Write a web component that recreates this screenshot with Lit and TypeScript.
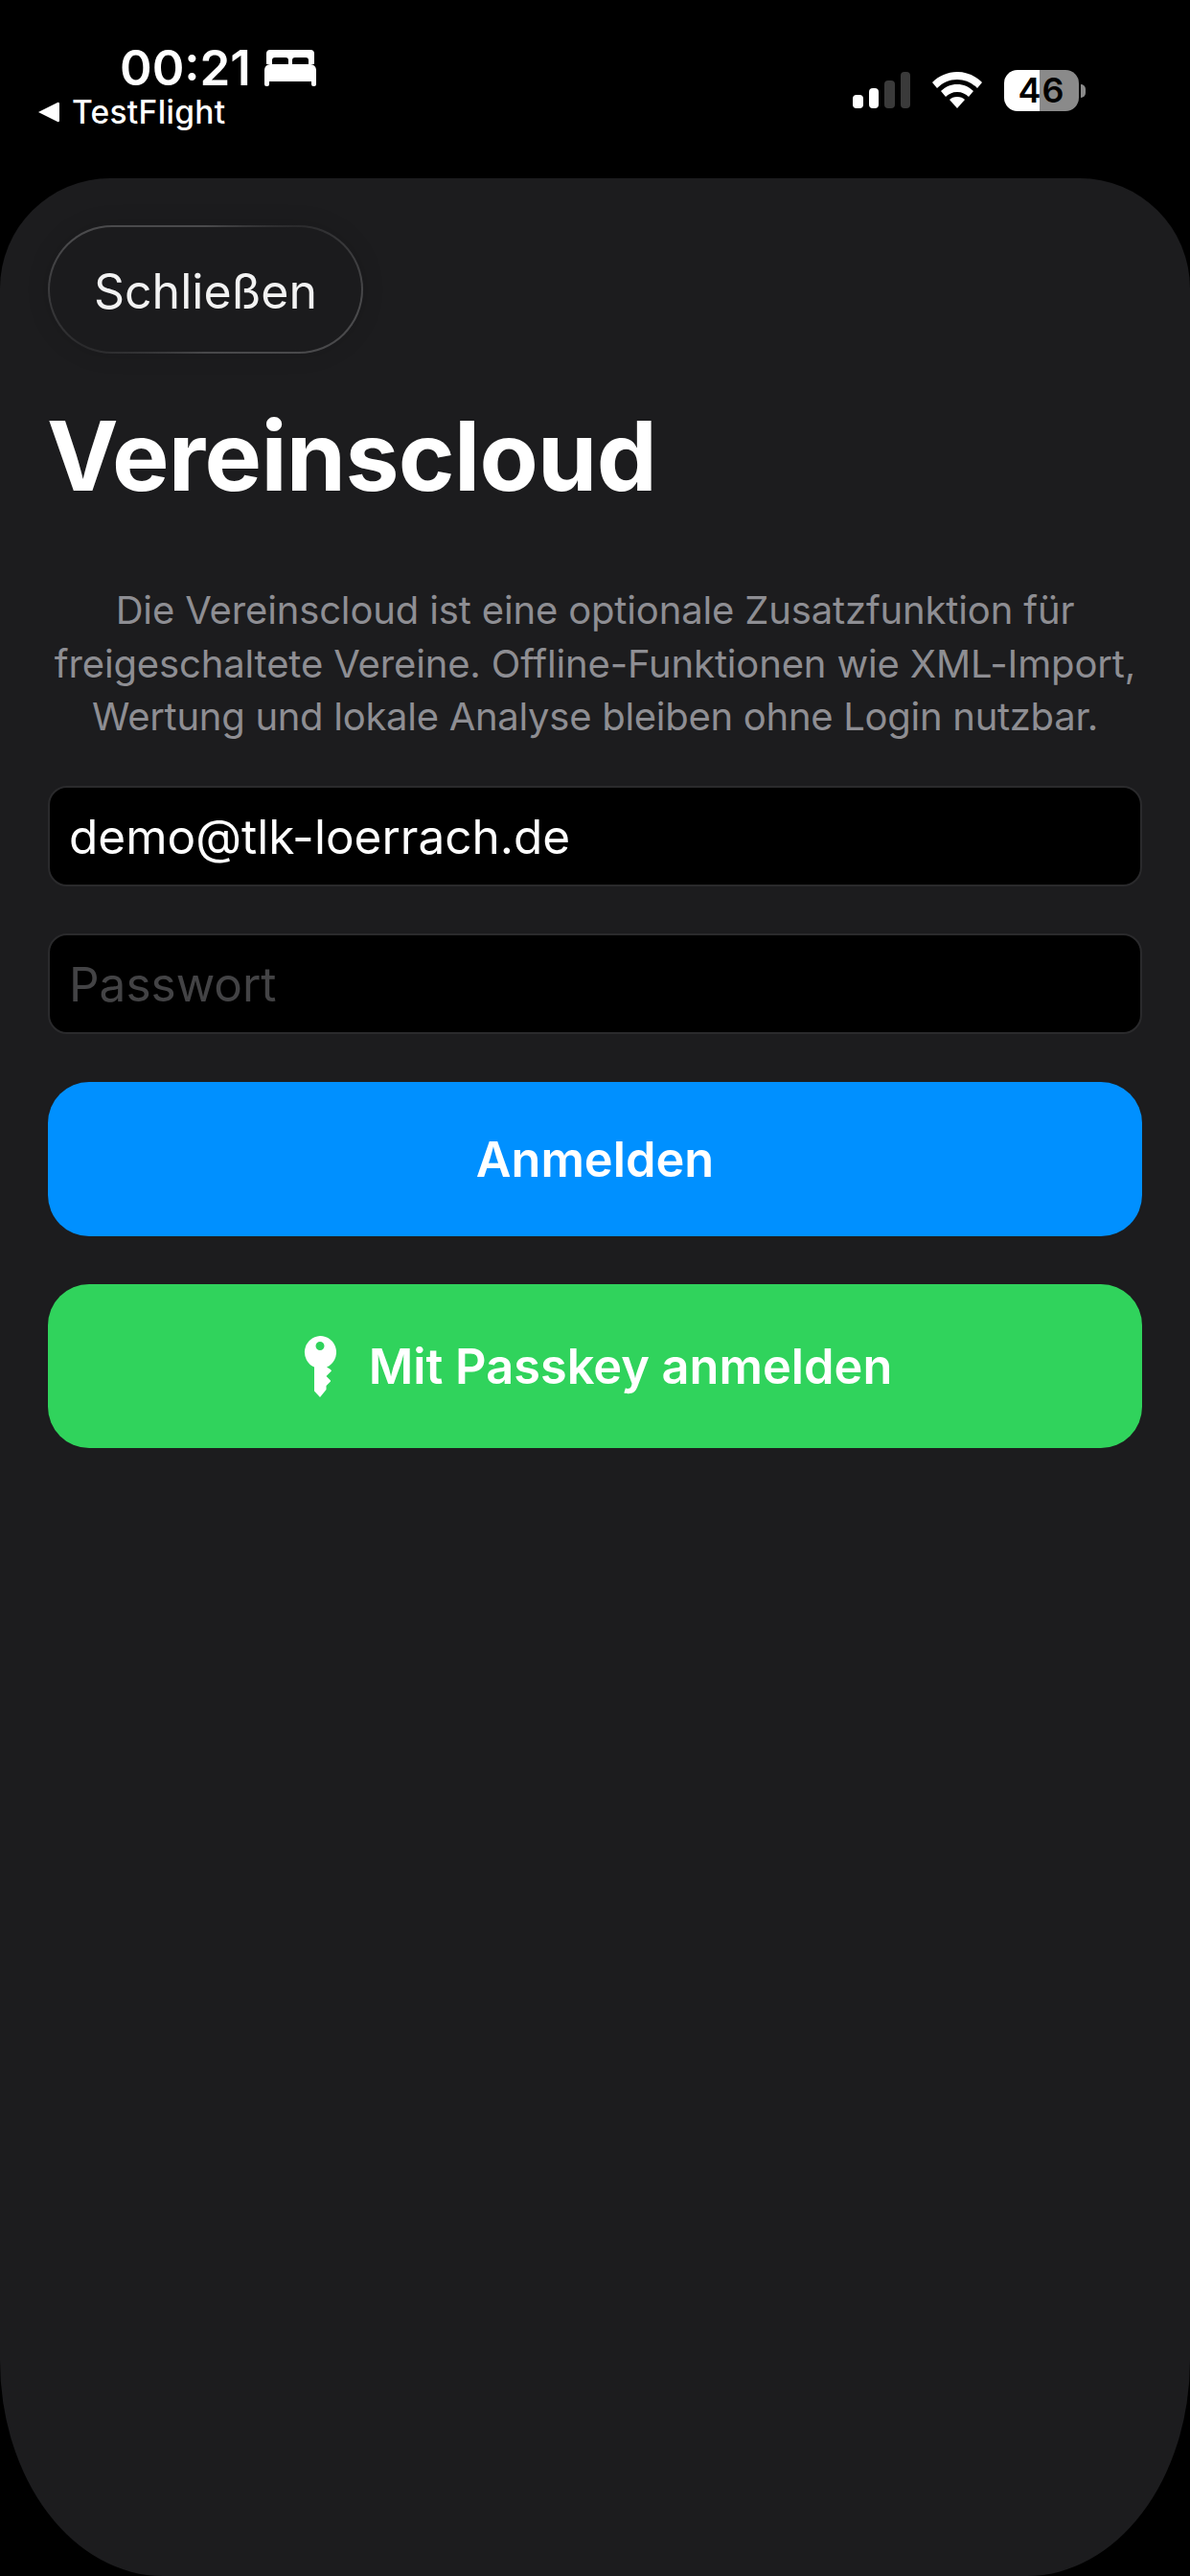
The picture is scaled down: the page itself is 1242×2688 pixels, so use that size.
import { LitElement, html, css } from "lit";
import { customElement } from "lit/decorators.js";

@customElement("app-root")
export class AppRoot extends LitElement {
  static styles = css`
    :host {
      display: block;
      width: 1242px;
      height: 2688px;
      background: #000;
      color: #fff;
      font-family: Inter, "Liberation Sans", sans-serif;
      overflow: hidden;
    }
    .status {
      height: 186px;
      box-sizing: border-box;
      display: flex;
      justify-content: space-between;
      align-items: flex-start;
      padding: 0 109px 0 40px;
    }
    .left { display: flex; flex-direction: column; padding-top: 40px; }
    .time-row { display: flex; align-items: center; gap: 14px; padding-left: 85px; height: 62px; }
    .time { font-size: 51px; font-weight: 600; line-height: 62px; }
    .back { display: flex; align-items: center; gap: 13px; height: 36px; margin-top: -3px; font-size: 33.5px; font-weight: 500; line-height: 36px; letter-spacing: 0.3px; }
    .right { display: flex; align-items: flex-start; padding-top: 73px; }
    .signal { display: flex; align-items: flex-end; gap: 6px; height: 40px; margin-right: 23px; }
    .bar { width: 10.5px; border-radius: 4px; background: #fff; }
    .bar.dim { background: #3a3a3a; }
    .wifi { margin: 2px 23px 0 0; display: block; }
    .battery {
      width: 78px; height: 43px; border-radius: 14px;
      background: linear-gradient(90deg, #fff 0 37px, #8a8a8a 37px);
      color: #000; font-size: 36px; font-weight: 600;
      display: flex; align-items: center; justify-content: center;
      line-height: 43px; letter-spacing: 1px;
    }
    .nub { width: 5px; height: 14px; margin: 15px 0 0 2px; background: #8a8a8a; border-radius: 0 6px 6px 0; }
    .sheet {
      height: 2502px;
      box-sizing: border-box;
      background: #1c1c1e;
      border-radius: 115px 115px 170px 170px / 115px 115px 225px 225px;
      padding: 49px 50px 0;
      display: flex;
      flex-direction: column;
      align-items: stretch;
    }
    .close {
      align-self: flex-start;
      width: 329px; height: 134px; box-sizing: border-box;
      border-radius: 67px;
      border: 2px solid transparent;
      background:
        linear-gradient(#1b1b1d, #1b1b1d) padding-box,
        conic-gradient(#4a4a4c 0deg, #2a2a2c 55deg, #4a4a4c 95deg, #48484a 180deg, #2a2a2c 245deg, #4a4a4c 290deg, #4a4a4c 360deg) border-box;
      box-shadow: 0 0 24px rgba(0, 0, 0, 0.12);
      color: #f2f2f2;
      font-size: 50px;
      padding-top: 4px;
      display: flex; align-items: center; justify-content: center;
    }
    h1 { margin: 45px 0 0 -1px; font-size: 100px; font-weight: 700; line-height: 124px; letter-spacing: -0.65px; }
    .desc {
      margin: 71px -10px 0;
      text-align: center;
      font-size: 40px;
      line-height: 55.7px;
      letter-spacing: -0.15px;
      color: #8e8e93;
    }
    .tight { letter-spacing: -0.28px; }
    .field {
      box-sizing: border-box; height: 105px; border-radius: 20px;
      background: #000; border: 2px solid #2a2a2c;
      padding: 0 20px; font-size: 49.5px;
      display: flex; align-items: center;
    }
    .field.first { margin-top: 44px; }
    .field.second { margin-top: 49px; color: #434345; }
    .btn {
      border-radius: 43px; font-size: 50.5px; font-weight: 600;
      display: flex; align-items: center; justify-content: center;
    }
    .blue { margin-top: 50px; height: 161px; background: #0090ff; }
    .green { margin-top: 50px; height: 171px; background: #30d35c; gap: 34px; padding-left: 6px; }
    svg { display: block; }
  `;

  render() {
    return html`
      <div class="status">
        <div class="left">
          <div class="time-row">
            <span class="time">00:21</span>
            <svg width="54" height="38" viewBox="0 0 54 38" fill="#fff">
              <path d="M6 0h42a4 4 0 0 1 4 4v11h-6v-4a3 3 0 0 0-3-3h-11a3 3 0 0 0-3 3v4h-4v-4a3 3 0 0 0-3-3h-11a3 3 0 0 0-3 3v4h-6V4a4 4 0 0 1 4-4z"/>
              <path d="M6 15h42a6 6 0 0 1 6 6v15a2 2 0 0 1-2 2h-1a2 2 0 0 1-2-2v-3H5v3a2 2 0 0 1-2 2H2a2 2 0 0 1-2-2V21a6 6 0 0 1 6-6z"/>
            </svg>
          </div>
          <div class="back">
            <svg width="22" height="22" viewBox="0 0 22 22" fill="#fff"><path d="M0 11 L20 1 a1.5 1.5 0 0 1 2 1 V20 a1.5 1.5 0 0 1-2 1z"/></svg>
            <span>TestFlight</span>
          </div>
        </div>
        <div class="right">
          <div class="signal">
            <div class="bar" style="height:14px"></div>
            <div class="bar" style="height:21px"></div>
            <div class="bar dim" style="height:29px"></div>
            <div class="bar dim" style="height:38px"></div>
          </div>
          <svg class="wifi" width="52" height="38" viewBox="0 0 52 38" fill="#fff">
            <path d="M26 0C36 0 45 4 52 11l-5 6C41 11 34 8 26 8S11 11 5 17L0 11C7 4 16 0 26 0z"/>
            <path d="M26 13c7 0 12 2.500 17 7l-5 6c-3-3-7-5-12-5s-9 2-12 5l-5-6c5-4.500 10-7 17-7z"/>
            <path d="M26 26c3.500 0 6 1 8 3L26 38l-8-9c2-2 4.500-3 8-3z"/>
          </svg>
          <div class="battery">46</div>
          <div class="nub"></div>
        </div>
      </div>
      <div class="sheet">
        <div class="close">Schließen</div>
        <h1>Vereinscloud</h1>
        <div class="desc">Die Vereinscloud ist eine optionale Zusatzfunktion für<br />freigeschaltete Vereine. Offline-Funktionen wie XML-Import,<br /><span class="tight">Wertung und lokale Analyse bleiben ohne Login nutzbar.</span></div>
        <div class="field first">demo@tlk-loerrach.de</div>
        <div class="field second">Passwort</div>
        <div class="btn blue">Anmelden</div>
        <div class="btn green">
          <svg width="34" height="64" viewBox="0 0 34 64" fill="#fff" fill-rule="evenodd">
            <path d="M17 0a17 17 0 0 1 7 32.500l4 2.500 1 1.500-5.500 5.500 4.500 4.500v1l-4.500 4.500v4L17 64l-6-6.500V32.500A17 17 0 0 1 17 0zm0 6a4.500 4.500 0 1 0 0 9 4.500 4.500 0 0 0 0-9z"/>
          </svg>
          <span>Mit Passkey anmelden</span>
        </div>
      </div>
    `;
  }
}
